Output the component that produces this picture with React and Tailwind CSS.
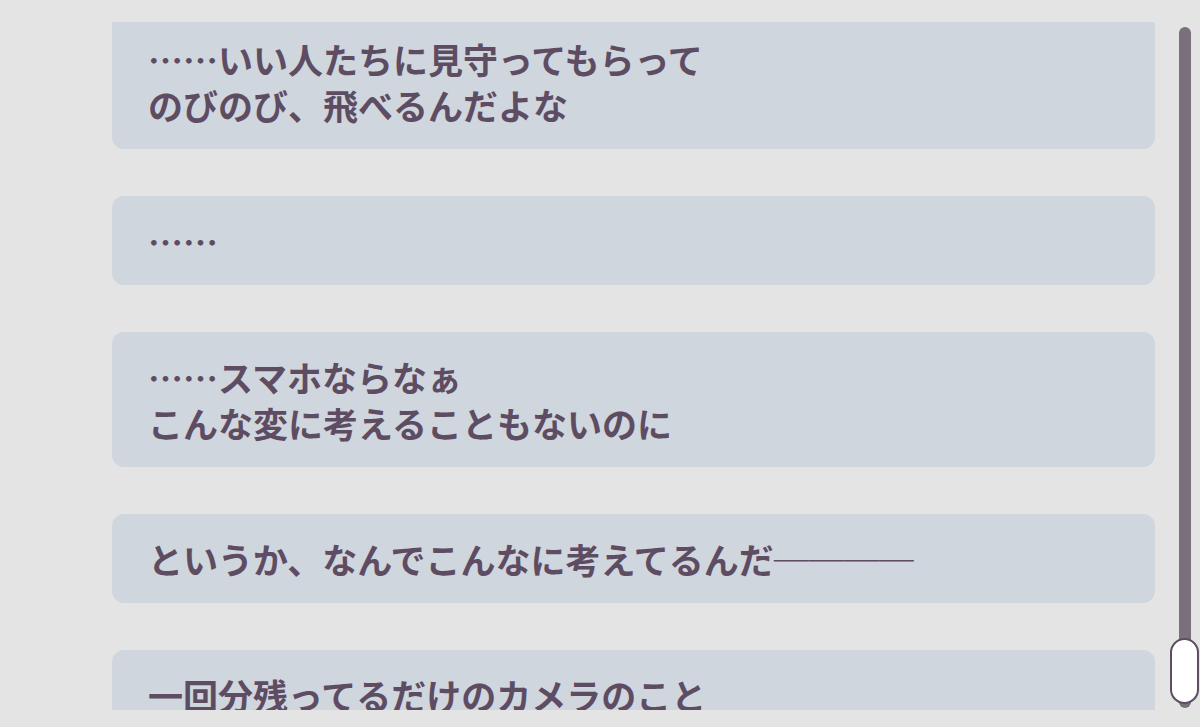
import React from 'react';

// 会話ログ（モノローグ）の一覧
const lines = [
  ['……いい人たちに見守ってもらって', 'のびのび、飛べるんだよな'],
  ['……'],
  ['……スマホならなぁ', 'こんな変に考えることもないのに'],
  ['というか、なんでこんなに考えてるんだ────'],
  ['一回分残ってるだけのカメラのこと'],
];

const LogCard = ({ text }) => (
  <div className="rounded-[12px] bg-[#cfd6de] pl-[36px] pr-6 py-[21.5px]">
    {text.map((t, i) => (
      <p key={i} className="text-[35px] leading-[46px] font-bold text-[#5e4d62] whitespace-nowrap">
        {t}
      </p>
    ))}
  </div>
);

export default function App() {
  return (
    <div
      className="h-[727px] w-[1200px] bg-[#e4e4e4] flex overflow-hidden"
      style={{ fontFamily: '"Noto Sans CJK JP", "Noto Sans", sans-serif' }}
    >
      {/* ログ表示領域（スクロール済み） */}
      <div className="ml-[112px] mt-[22px] h-[688px] w-[1043px] overflow-hidden">
        <div className="-mt-[8px] flex flex-col gap-[47px]">
          {lines.map((text, i) => (
            <LogCard key={i} text={text} />
          ))}
        </div>
      </div>

      {/* スクロールバー */}
      <div className="relative ml-[15px] w-[29px]">
        <div className="mx-auto mt-[27px] h-[681px] w-[12px] rounded-full bg-[#7b6f7d]" />
        <div className="absolute left-0 top-[638px] h-[66px] w-[29px] rounded-full border-2 border-[#5e4d62] bg-white" />
      </div>
    </div>
  );
}
